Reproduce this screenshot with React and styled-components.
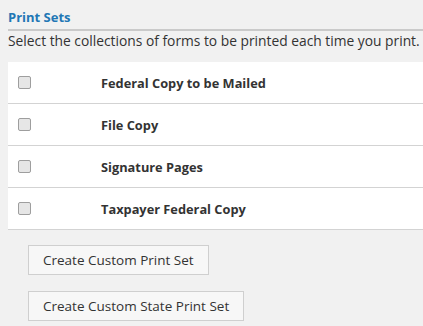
import React from "react";
import styled, { createGlobalStyle } from "styled-components";

const Global = createGlobalStyle`
  html, body { margin: 0; padding: 0; background: #f1f1f1; }
  body { font-family: "Open Sans", "Liberation Sans", sans-serif; color: #333; }
`;

const Page = styled.div`
  padding: 7px 0 0 8px;
  width: 415px;
  overflow: hidden;
`;

const Title = styled.h2`
  margin: 0;
  font-size: 13px;
  font-weight: 700;
  color: #2277b5;
  line-height: 20px;
  padding-bottom: 2px;
  border-bottom: 2px solid #cacaca;
`;

const Description = styled.p`
  margin: 0;
  font-size: 13.8px;
  line-height: 19px;
  color: #333;
  white-space: nowrap;
  padding-bottom: 12px;
`;

const Panel = styled.ul`
  list-style: none;
  margin: 0;
  padding: 0;
  background: #fff;
`;

const Row = styled.li`
  display: flex;
  align-items: center;
  height: 41px;
  border-bottom: 1px solid #d3d3d3;
  padding-left: 10px;
`;

const Box = styled.span`
  width: 11px;
  height: 11px;
  border: 1px solid #9e9e9e;
  border-radius: 2px;
  background: #e6e6e6;
  flex: none;
`;

const Label = styled.span`
  margin-left: 70px;
  font-size: 12.8px;
  font-weight: 700;
  color: #333;
`;

const Actions = styled.div`
  display: flex;
  flex-direction: column;
  align-items: flex-start;
  gap: 16px;
  padding: 15px 0 0 20px;
`;

const Button = styled.button`
  height: 30px;
  padding: 0 14px;
  background: #f7f7f7;
  border: 1px solid #cfcfcf;
  border-radius: 0;
  font-family: inherit;
  font-size: 13.5px;
  color: #333;
`;

const sets = ["Federal Copy to be Mailed", "File Copy", "Signature Pages", "Taxpayer Federal Copy"];

export default function App() {
  return (
    <Page>
      <Global />
      <Title>Print Sets</Title>
      <Description>Select the collections of forms to be printed each time you print.</Description>
      <Panel>
        {sets.map((s) => (
          <Row key={s}>
            <Box />
            <Label>{s}</Label>
          </Row>
        ))}
      </Panel>
      <Actions>
        <Button>Create Custom Print Set</Button>
        <Button>Create Custom State Print Set</Button>
      </Actions>
    </Page>
  );
}
